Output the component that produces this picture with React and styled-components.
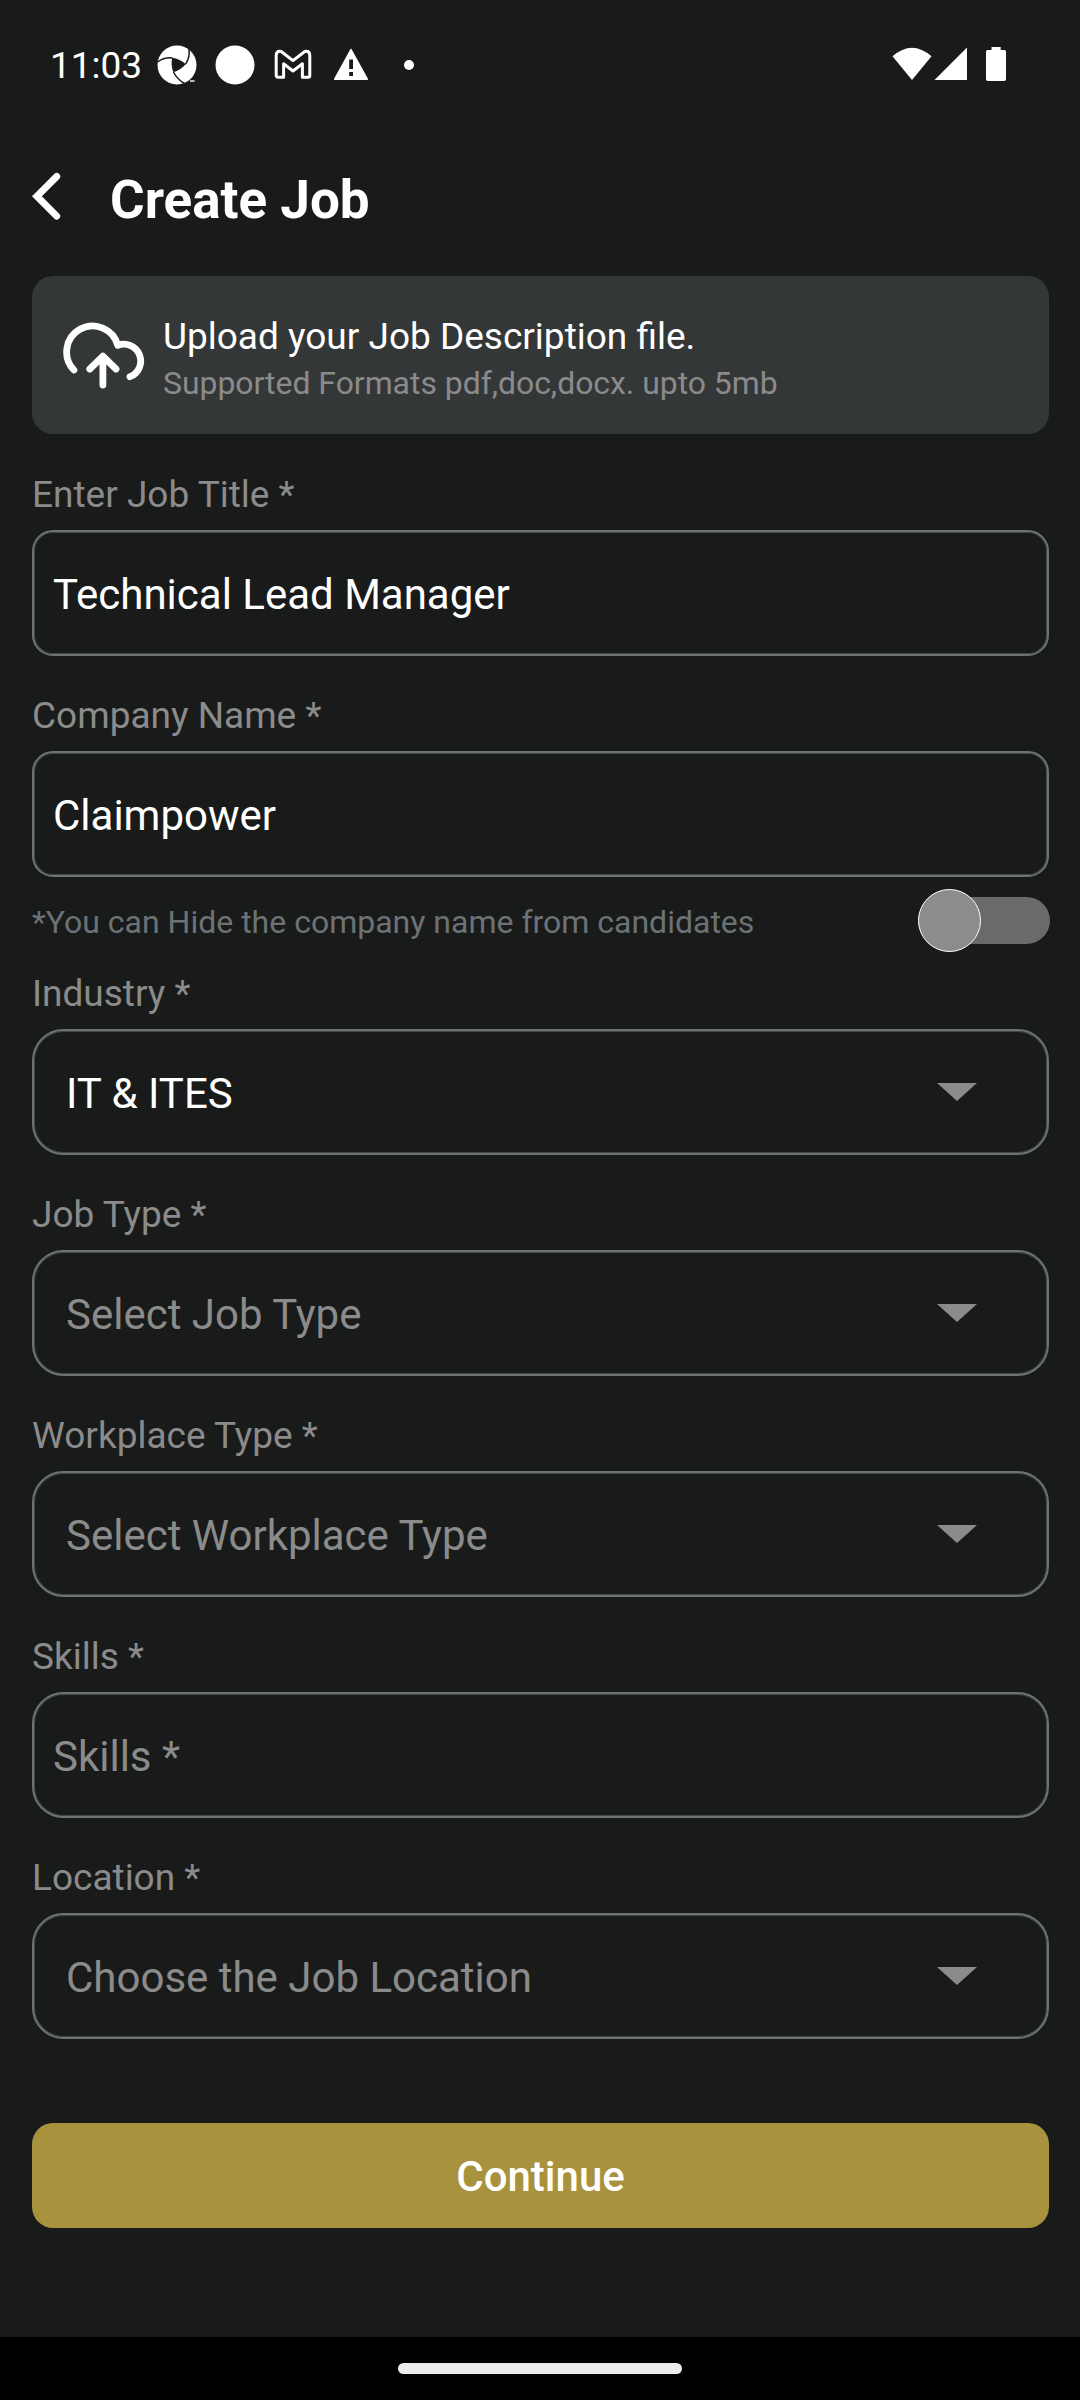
import React from "react";
import styled, { createGlobalStyle } from "styled-components";

const GlobalStyle = createGlobalStyle`
  * { box-sizing: border-box; }
  body {
    margin: 0;
    background: #191b1a;
    font-family: Roboto, "Liberation Sans", sans-serif;
    color: #ffffff;
  }
`;

const Screen = styled.div`
  width: 1080px;
  height: 2400px;
  display: flex;
  flex-direction: column;
  background: #191b1a;
`;

const StatusBar = styled.header`
  height: 130px;
  flex: none;
  display: flex;
  align-items: center;
  justify-content: space-between;
  padding: 0 73px 0 50px;
`;

const StatusGroup = styled.div`
  display: flex;
  align-items: center;
`;

const Clock = styled.span`
  font-size: 37px;
  line-height: 44px;
  width: 107px;
  padding-top: 1px;
  white-space: nowrap;
`;

const Glyph = styled.svg`
  display: block;
  flex: none;
  margin-left: ${(p) => p.$gap || 0}px;
`;

const TitleBar = styled.div`
  height: 146px;
  flex: none;
  display: flex;
  align-items: flex-start;
  padding: 39px 32px 0;
`;

const BackButton = styled.button`
  width: 78px;
  height: 54px;
  padding: 0;
  border: 0;
  background: none;
`;

const Title = styled.h1`
  margin: 0;
  padding-top: 1px;
  font-size: 53px;
  line-height: 60px;
  font-weight: 700;
`;

const Content = styled.main`
  flex: 1;
  display: flex;
  flex-direction: column;
  padding: 0 31px 0 32px;
`;

const UploadCard = styled.section`
  height: 158px;
  display: flex;
  align-items: center;
  gap: 18px;
  padding: 0 29px;
  border-radius: 21px;
  background: #343738;
`;

const UploadText = styled.div`
  display: flex;
  flex-direction: column;
  padding-top: 8px;
`;

const UploadTitle = styled.span`
  font-size: 37px;
  line-height: 48px;
`;

const UploadHint = styled.span`
  font-size: 31.9px;
  line-height: 44px;
  color: #8b8b8b;
`;

const Field = styled.div`
  display: flex;
  flex-direction: column;
  margin-top: ${(p) => p.$space ?? 37}px;
`;

const Label = styled.label`
  height: 58px;
  padding-top: 1px;
  font-size: 37px;
  line-height: 44px;
  color: #8b8b8b;
`;

const Control = styled.div`
  height: 126px;
  display: flex;
  align-items: center;
  justify-content: space-between;
  border: 2px solid #6c7275;
  box-shadow: inset 0 0 0 1px #43484a;
  border-radius: ${(p) => (p.$round ? 31.5 : 21)}px;
  padding: 0 ${(p) => (p.$select ? "70px 0 32px" : "19px 0 19px")};
`;

const Value = styled.span`
  font-size: 42px;
  line-height: 50px;
  padding-top: 3px;
  color: ${(p) => (p.$muted ? "#8b8b8b" : "#ffffff")};
`;

const HideRow = styled.div`
  display: flex;
  align-items: center;
  justify-content: space-between;
  height: 63px;
  margin: 12px -1px 0 0;
`;

const HideText = styled.span`
  font-size: 32px;
  line-height: 38px;
  padding-top: 2px;
  color: #6c7275;
`;

const Switch = styled.div`
  width: 132px;
  height: 47px;
  display: flex;
  align-items: center;
  border-radius: 24px;
  background: #6a6a6a;
`;

const Knob = styled.div`
  width: 63px;
  height: 63px;
  flex: none;
  border: 1px solid #ffffff;
  border-radius: 50%;
  background: #8c8c8c;
`;

const ContinueButton = styled.button`
  height: 105px;
  margin-top: 84px;
  padding: 3px 0 0;
  border: 0;
  border-radius: 21px;
  background: #a8923e;
  color: #ffffff;
  font-family: inherit;
  font-size: 42px;
  line-height: 50px;
  font-weight: 500;
`;

const NavBar = styled.footer`
  height: 63px;
  flex: none;
  display: flex;
  align-items: center;
  justify-content: center;
  background: #000000;
`;

const HomePill = styled.div`
  width: 284px;
  height: 11px;
  border-radius: 6px;
  background: #ebebeb;
`;

function Caret() {
  return (
    <Glyph width="40" height="18" viewBox="0 0 40 18">
      <path d="M0 0H40L20 18Z" fill="#8b8b8b" />
    </Glyph>
  );
}

function TextField({ label, value, muted, round, space }) {
  return (
    <Field $space={space}>
      <Label>{label}</Label>
      <Control $round={round}>
        <Value $muted={muted}>{value}</Value>
      </Control>
    </Field>
  );
}

function SelectField({ label, value, muted, space }) {
  return (
    <Field $space={space}>
      <Label>{label}</Label>
      <Control $round $select>
        <Value $muted={muted}>{value}</Value>
        <Caret />
      </Control>
    </Field>
  );
}

export default function App() {
  return (
    <>
      <GlobalStyle />
      <Screen>
        <StatusBar>
          <StatusGroup>
            <Clock>11:03</Clock>
            <Glyph width="40" height="40" viewBox="-20 -20 40 40">
              <circle r="19.5" fill="#fff" />
              <path d="M-4.8 -7.2Q3 -6 8.8 -.8Q3 5.5 -3.6 7.2Q-6.5 0 -4.8 -7.2Z" fill="#191b1a" />
              <path
                d="M-4.5 -7Q-12.5 -8 -19.5 -3M8.6 -1Q13.5 -8 11.8 -17M-3.6 7Q0 14 7.5 18.5"
                fill="none"
                stroke="#191b1a"
                strokeWidth="1.5"
              />
              <path d="M13 16H17.5" stroke="#fff" strokeWidth="1.4" />
            </Glyph>
            <Glyph $gap={18} width="40" height="40" viewBox="-20 -20 40 40">
              <circle r="19.5" fill="#fff" />
            </Glyph>
            <Glyph $gap={19} width="38" height="32" viewBox="0 0 38 32">
              <path
                d="M2.2 26.5V6.2Q2.2 2.2 5.8 2.2Q7 2.2 8.2 3.2L19 11.6L29.8 3.2Q31 2.2 32.2 2.2Q35.8 2.2 35.8 6.2V26.5Q35.8 28.2 34.1 28.2H28.4V14.8L19 22L9.6 14.8V28.2H3.9Q2.2 28.2 2.2 26.5Z"
                fill="none"
                stroke="#fff"
                strokeWidth="3"
                strokeLinejoin="round"
              />
            </Glyph>
            <Glyph $gap={21} width="36" height="40" viewBox="0 0 36 40">
              <path d="M18 4.5L34.3 34.2H1.7Z" fill="#fff" stroke="#fff" strokeWidth="1.5" strokeLinejoin="round" />
              <path d="M16.2 14.5h3.8v9.5h-3.8zM16.2 27h3.8v4h-3.8z" fill="#191b1a" />
            </Glyph>
            <Glyph $gap={35} width="10" height="10" viewBox="0 0 10 10">
              <circle cx="5" cy="5" r="5" fill="#fff" />
            </Glyph>
          </StatusGroup>
          <StatusGroup>
            <Glyph width="40" height="36" viewBox="0 0 40 36">
              <path d="M.5 9.3Q20 -8 39.5 9.3L20 33Z" fill="#fff" />
            </Glyph>
            <Glyph $gap={2} width="34" height="36" viewBox="0 0 34 36">
              <path d="M33 .5V33H.5Z" fill="#fff" />
            </Glyph>
            <Glyph $gap={18} width="21" height="36" viewBox="0 0 21 36">
              <path d="M5.5 0H14.7V3H18.5Q20 3 20 4.5V32Q20 34 18 34H2Q0 34 0 32V4.5Q0 3 1.5 3H5.5Z" fill="#fff" />
            </Glyph>
          </StatusGroup>
        </StatusBar>

        <TitleBar>
          <BackButton aria-label="Back">
            <Glyph width="32" height="54" viewBox="0 0 32 54">
              <path d="M24.7 7.5L4.9 27.3L24.7 47.1" fill="none" stroke="#fff" strokeWidth="7" strokeLinecap="round" />
            </Glyph>
          </BackButton>
          <Title>Create Job</Title>
        </TitleBar>

        <Content>
          <UploadCard>
            <Glyph width="84" height="70" viewBox="61.4 320 84 70">
              <path
                d="M74.3 370A26 26 0 1 1 118.2 345.4A16.5 16.5 0 0 1 130.4 376.7M103.3 385V357M90.2 369L103.3 356.2L116.4 369"
                fill="none"
                stroke="#fff"
                strokeWidth="6.8"
                strokeLinecap="round"
                strokeLinejoin="round"
              />
            </Glyph>
            <UploadText>
              <UploadTitle>Upload your Job Description file.</UploadTitle>
              <UploadHint>Supported Formats pdf,doc,docx. upto 5mb</UploadHint>
            </UploadText>
          </UploadCard>

          <TextField label="Enter Job Title *" value="Technical Lead Manager" space={38} />
          <TextField label="Company Name *" value="Claimpower" />
          <HideRow>
            <HideText>*You can Hide the company name from candidates</HideText>
            <Switch>
              <Knob />
            </Switch>
          </HideRow>
          <SelectField label="Industry *" value="IT & ITES" space={19} />
          <SelectField label="Job Type *" value="Select Job Type" muted />
          <SelectField label="Workplace Type *" value="Select Workplace Type" muted />
          <TextField label="Skills *" value="Skills *" muted round />
          <SelectField label="Location *" value="Choose the Job Location" muted />

          <ContinueButton>Continue</ContinueButton>
        </Content>

        <NavBar>
          <HomePill />
        </NavBar>
      </Screen>
    </>
  );
}
